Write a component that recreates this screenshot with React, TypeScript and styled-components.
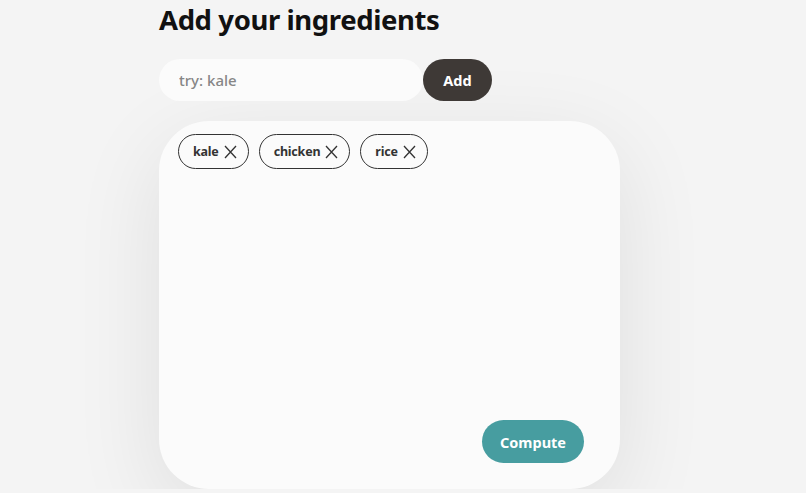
import React, { useState } from "react";
import styled, { createGlobalStyle } from "styled-components";

const GlobalStyle = createGlobalStyle`
  html, body {
    margin: 0;
    padding: 0;
    background: #f4f4f4;
    font-family: "Noto Sans", "Open Sans", sans-serif;
  }
  * {
    box-sizing: border-box;
  }
`;

const Page = styled.main`
  width: 488px;
  margin: 0 auto;
`;

const Title = styled.h1`
  margin: 0;
  font-size: 27.5px;
  line-height: 40px;
  font-weight: 700;
  color: #111;
  letter-spacing: -0.4px;
`;

const InputRow = styled.form`
  display: flex;
  margin-top: 19px;
`;

const TextInput = styled.input`
  width: 264px;
  height: 42px;
  border: none;
  border-radius: 21px;
  background: #fbfbfb;
  padding: 0 20px;
  font-family: inherit;
  font-size: 15px;
  font-weight: 500;
  color: #333;
  outline: none;

  &::placeholder {
    color: #868686;
  }
`;

const AddButton = styled.button`
  width: 69px;
  height: 42px;
  border: none;
  border-radius: 21px;
  background: #3e3936;
  color: #fff;
  font-family: inherit;
  font-size: 14.5px;
  font-weight: 700;
`;

const Panel = styled.section`
  width: 461px;
  height: 368px;
  margin-top: 20px;
  background: #fbfbfb;
  border-radius: 50px;
  box-shadow: 0 24px 90px rgba(0, 0, 0, 0.09);
  padding: 13px 36px 26px 19px;
  display: flex;
  flex-direction: column;
  justify-content: space-between;
`;

const ChipList = styled.div`
  display: flex;
  flex-wrap: wrap;
  gap: 10px;
`;

const Chip = styled.div`
  display: flex;
  align-items: center;
  gap: 5px;
  height: 35px;
  padding: 0 11px 0 14px;
  border: 1px solid #333;
  border-radius: 18px;
  font-size: 12.5px;
  font-weight: 700;
  color: #333;
  letter-spacing: -0.2px;
`;

const RemoveButton = styled.button`
  display: flex;
  padding: 0;
  border: none;
  background: none;
  color: #333;
`;

const Footer = styled.div`
  display: flex;
  justify-content: flex-end;
`;

const ComputeButton = styled.button`
  width: 102px;
  height: 43px;
  border: none;
  border-radius: 22px;
  background: #479da0;
  color: #fff;
  font-family: inherit;
  font-size: 14.5px;
  font-weight: 700;
`;

function CloseIcon() {
  return (
    <svg width="13" height="14" viewBox="0 0 13 14" fill="none">
      <path d="M1 1 L12 13 M12 1 L1 13" stroke="currentColor" strokeWidth="1.3" />
    </svg>
  );
}

export default function App() {
  const [items, setItems] = useState(["kale", "chicken", "rice"]);

  return (
    <>
      <GlobalStyle />
      <Page>
        <Title>Add your ingredients</Title>
        <InputRow onSubmit={(e) => e.preventDefault()}>
          <TextInput placeholder="try: kale" />
          <AddButton type="submit">Add</AddButton>
        </InputRow>
        <Panel>
          <ChipList>
            {items.map((item) => (
              <Chip key={item}>
                {item}
                <RemoveButton
                  onClick={() => setItems(items.filter((i) => i !== item))}
                >
                  <CloseIcon />
                </RemoveButton>
              </Chip>
            ))}
          </ChipList>
          <Footer>
            <ComputeButton>Compute</ComputeButton>
          </Footer>
        </Panel>
      </Page>
    </>
  );
}
